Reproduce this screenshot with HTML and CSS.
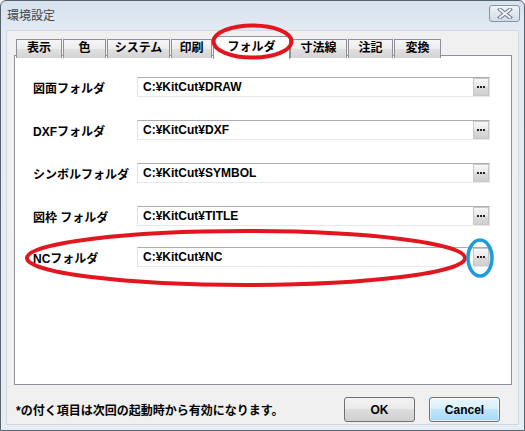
FILE: index.html
```html
<!DOCTYPE html>
<html lang="ja">
<head>
    <meta charset="UTF-8">
    <title>環境設定</title>
    <link rel="stylesheet" href="styles.css">
</head>
<body>
    <div class="dialog">
        <div class="titlebar">
            <span class="title">環境設定</span>
            <button class="close">
                <svg width="16" height="11" viewBox="0 0 16 11">
                    <path d="M3 1.5 L13 9.5 M13 1.5 L3 9.5" stroke="#6f7c8b" stroke-width="4" stroke-linecap="square" fill="none"/>
                    <path d="M3 1.5 L13 9.5 M13 1.5 L3 9.5" stroke="#eef2f6" stroke-width="2" stroke-linecap="square" fill="none"/>
                </svg>
            </button>
        </div>

        <div class="client">
            <div class="tabs">
                <div class="tab">表示</div>
                <div class="tab">色</div>
                <div class="tab">システム</div>
                <div class="tab">印刷</div>
                <div class="tab active">フォルダ</div>
                <div class="tab">寸法線</div>
                <div class="tab">注記</div>
                <div class="tab">変換</div>
            </div>

            <div class="panel">
                <div class="row">
                    <label>図面フォルダ</label>
                    <div class="field"><span class="path">C:¥KitCut¥DRAW</span><span class="browse"><svg width="9" height="3"><rect x="0" y="0" width="2" height="2"/><rect x="3" y="0" width="2" height="2"/><rect x="6" y="0" width="2" height="2"/></svg></span></div>
                </div>
                <div class="row">
                    <label>DXFフォルダ</label>
                    <div class="field"><span class="path">C:¥KitCut¥DXF</span><span class="browse"><svg width="9" height="3"><rect x="0" y="0" width="2" height="2"/><rect x="3" y="0" width="2" height="2"/><rect x="6" y="0" width="2" height="2"/></svg></span></div>
                </div>
                <div class="row">
                    <label>シンボルフォルダ</label>
                    <div class="field"><span class="path">C:¥KitCut¥SYMBOL</span><span class="browse"><svg width="9" height="3"><rect x="0" y="0" width="2" height="2"/><rect x="3" y="0" width="2" height="2"/><rect x="6" y="0" width="2" height="2"/></svg></span></div>
                </div>
                <div class="row">
                    <label>図枠 フォルダ</label>
                    <div class="field"><span class="path">C:¥KitCut¥TITLE</span><span class="browse"><svg width="9" height="3"><rect x="0" y="0" width="2" height="2"/><rect x="3" y="0" width="2" height="2"/><rect x="6" y="0" width="2" height="2"/></svg></span></div>
                </div>
                <div class="row row-nc">
                    <label>NCフォルダ</label>
                    <div class="field"><span class="path">C:¥KitCut¥NC</span><span class="browse"><svg width="9" height="3"><rect x="0" y="0" width="2" height="2"/><rect x="3" y="0" width="2" height="2"/><rect x="6" y="0" width="2" height="2"/></svg></span></div>
                </div>
            </div>

            <div class="footer">
                <span class="note">*の付く項目は次回の起動時から有効になります。</span>
                <button class="btn">OK</button>
                <button class="btn btn-default">Cancel</button>
            </div>
        </div>

        <!-- hand drawn marks on the screenshot -->
        <svg class="marks" width="525" height="431" viewBox="0 0 525 431">
            <ellipse cx="252.5" cy="41.5" rx="39" ry="16" fill="none" stroke="#e2161f" stroke-width="4"/>
            <ellipse cx="246" cy="258" rx="219" ry="27" fill="none" stroke="#e2161f" stroke-width="4"/>
            <ellipse cx="480" cy="258" rx="12" ry="18" fill="none" stroke="#1d9be0" stroke-width="3.5"/>
        </svg>
    </div>
</body>
</html>
```

FILE: styles.css
```css
body{
    margin: 0;
    background: #fff;
    font-family: "Liberation Sans", "Noto Sans CJK JP", sans-serif;
    font-size: 12px;
    color: #000;
}
.dialog{
    position: relative;
    box-sizing: border-box;
    width: 525px;
    height: 431px;
    border: 1px solid #56626e;
    border-radius: 6px 6px 0 0;
    padding: 0 5px 5px;
    background: linear-gradient(#d7e2ef, #e3eaf3 30px, #e7edf4);
    display: flex;
    flex-direction: column;
}
.titlebar{
    height: 29px;
    display: flex;
    align-items: center;
    justify-content: space-between;
}
.title{
    padding-left: 1px;
    margin-top: -2px;
    color: #444;
    font-family: "Noto Sans CJK JP", sans-serif;
    font-size: 12px;
}
.close{
    width: 31px;
    height: 17px;
    margin: -4px -1px 0 0;
    padding: 0;
    border: 1px solid #8795a6;
    border-radius: 3px;
    background: linear-gradient(#f0f4f8, #dfe6ee 50%, #d3dce7);
    display: flex;
    align-items: center;
    justify-content: center;
}
.client{
    flex: 1;
    display: flex;
    flex-direction: column;
    background: #f0f0f0;
    border: 1px solid #d0d8e1;
}
.tabs{
    position: relative;
    z-index: 1;
    height: 19px;
    margin: 5px 0 0 9px;
    display: grid;
    grid-template-columns: 47px 44px 64px 42px 77px 58px 46px 48px;
    align-items: end;
}
.tab{
    box-sizing: border-box;
    height: 19px;
    margin-right: 1px;
    border: 1px solid #8e9199;
    border-bottom: none;
    background: linear-gradient(#f6f6f6, #ececec 50%, #e0e0e0 51%, #d4d4d4);
    font-weight: bold;
    text-align: center;
    line-height: 17px;
}
.tab.active{
    height: 23px;
    margin: 0 0 -1px 0;
    background: #fff;
    line-height: 21px;
}
.panel{
    box-sizing: border-box;
    height: 330px;
    margin: 0 6px 0 7px;
    padding: 21px 21px 0 18px;
    border: 1px solid #8e9199;
    background: #fff;
    display: flex;
    flex-direction: column;
    gap: 23px;
}
.row{
    display: flex;
    align-items: center;
    height: 20px;
}
.row-nc{
    margin-top: -2px;
}
.row label{
    width: 104px;
    font-weight: bold;
}
.field{
    flex: 1;
    box-sizing: border-box;
    height: 20px;
    display: flex;
    align-items: center;
    border: 1px solid;
    border-color: #abadb3 #dde1e7 #e3e9ef #e2e3ea;
    background: #fff;
}
.path{
    flex: 1;
    padding-left: 5px;
    font-weight: bold;
    line-height: 18px;
}
.browse{
    box-sizing: border-box;
    width: 16px;
    height: 18px;
    border: 1px solid #c9c9c9;
    background: linear-gradient(#f7f7f7, #e9e9e9 50%, #dcdcdc 51%, #d0d0d0);
    display: flex;
    align-items: center;
    justify-content: center;
}
.browse svg{
    fill: #222;
    margin-left: 1px;
}
.footer{
    flex: 1;
    display: flex;
    align-items: center;
    padding: 10px 18px 0 9px;
}
.note{
    font-weight: bold;
}
.btn{
    width: 71px;
    height: 25px;
    margin-left: 14px;
    padding: 0;
    border: 1px solid #707070;
    border-radius: 3px;
    background: linear-gradient(#f3f3f3, #ebebeb 45%, #dddddd 50%, #cfcfcf);
    font-family: "Liberation Sans", sans-serif;
    font-size: 12px;
    font-weight: bold;
    color: #000;
}
.note + .btn{
    margin-left: auto;
}
.btn-default{
    border-color: #3c7fb1;
    background: linear-gradient(#eaf6fd, #d9f0fc 45%, #bee6fd 50%, #a7d9f5);
    box-shadow: inset 0 0 0 1px rgba(255,255,255,.6);
}
.marks{
    position: absolute;
    z-index: 2;
    top: -1px;
    left: -1px;
    pointer-events: none;
}
```
